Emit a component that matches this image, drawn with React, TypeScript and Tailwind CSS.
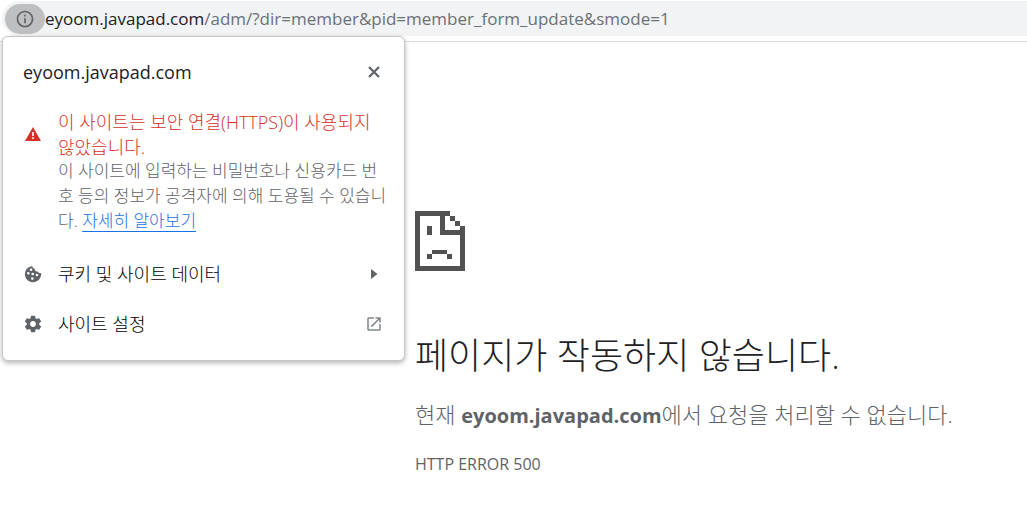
import type { ReactNode } from "react";

function InfoIcon() {
  return (
    <svg viewBox="0 0 24 24" className="size-5" fill="#5f6368" aria-hidden="true">
      <path d="M11 7h2v2h-2zm0 4h2v6h-2zm1-9C6.48 2 2 6.48 2 12s4.48 10 10 10 10-4.48 10-10S17.52 2 12 2zm0 18c-4.41 0-8-3.59-8-8s3.59-8 8-8 8 3.59 8 8-3.59 8-8 8z" />
    </svg>
  );
}

function CloseIcon() {
  return (
    <svg viewBox="0 0 12 12" className="size-3" stroke="#5f6368" strokeWidth="2.2" aria-hidden="true">
      <path d="M1 1l10 10M11 1L1 11" />
    </svg>
  );
}

function WarningIcon() {
  return (
    <svg viewBox="0 0 16 14" className="h-3.5 w-4" aria-hidden="true">
      <path d="M8 0l8 14H0z" fill="#d93025" />
      <path d="M7.2 5h1.6v4H7.2zM7.2 10.2h1.6v1.7H7.2z" fill="#fff" />
    </svg>
  );
}

function CookieIcon() {
  return (
    <svg viewBox="0 0 18 18" className="size-[18px]" aria-hidden="true">
      <path
        d="M8.2.9A8.2 8.2 0 1 0 17.2 9c0-.3 0-.6-.1-.9-1.300.4-2.700-.2-3.200-1.500-1.900.2-3.500-1.200-3.400-3.100C9.200 3.200 8.300 2.200 8.200.9z"
        fill="#5f6368"
      />
      <g fill="#fff">
        <circle cx="7" cy="4.700" r="1.300" />
        <circle cx="4.300" cy="8.300" r="1.300" />
        <circle cx="8.700" cy="9" r="1.300" />
        <circle cx="13" cy="10" r="1.300" />
        <circle cx="8.300" cy="13.600" r="1.300" />
      </g>
    </svg>
  );
}

function GearIcon() {
  return (
    <svg viewBox="0 0 24 24" className="size-5" fill="#5f6368" aria-hidden="true">
      <path d="M19.430 12.980c.04-.32.07-.64.07-.98s-.03-.66-.07-.98l2.110-1.650c.19-.15.24-.42.12-.64l-2-3.460c-.12-.22-.39-.3-.61-.22l-2.490 1c-.52-.4-1.080-.73-1.690-.98l-.38-2.650C14.460 2.180 14.250 2 14 2h-4c-.25 0-.46.18-.49.42l-.38 2.650c-.61.25-1.170.59-1.690.98l-2.490-1c-.23-.09-.49 0-.61.22l-2 3.460c-.13.22-.07.49.12.64l2.110 1.650c-.04.32-.07.65-.07.98s.03.66.07.98l-2.110 1.650c-.19.15-.24.42-.12.64l2 3.460c.12.22.39.3.61.22l2.490-1c.52.4 1.080.73 1.690.98l.38 2.650c.03.24.24.42.49.42h4c.25 0 .46-.18.49-.42l.38-2.650c.61-.25 1.170-.59 1.690-.98l2.490 1c.23.09.49 0 .61-.22l2-3.460c.12-.22.07-.49-.12-.64l-2.110-1.650zM12 15.500c-1.930 0-3.500-1.570-3.500-3.500s1.570-3.500 3.500-3.500 3.500 1.570 3.500 3.500-1.570 3.500-3.500 3.500z" />
    </svg>
  );
}

function ArrowIcon() {
  return (
    <svg viewBox="0 0 18 18" className="size-[18px]" fill="#5f6368" aria-hidden="true">
      <path d="M6 4l6.500 5L6 14z" />
    </svg>
  );
}

function LaunchIcon() {
  return (
    <svg viewBox="0 0 24 24" className="size-[18px]" fill="#80868b" aria-hidden="true">
      <path d="M19 19H5V5h7V3H5c-1.110 0-2 .9-2 2v14c0 1.100.89 2 2 2h14c1.100 0 2-.9 2-2v-7h-2v7zM14 3v2h3.590l-9.830 9.830 1.410 1.410L19 6.410V10h2V3h-7z" />
    </svg>
  );
}

function SadPageIcon() {
  return (
    <svg viewBox="0 0 50 60" className="h-[60px] w-[50px]" fill="#525252" shapeRendering="crispEdges" aria-hidden="true">
      <path d="M0 0h35v5H30v14h20v41H0zM5 5v50h40V24H25V5z" fillRule="evenodd" />
      <path d="M35 5h5v5h-5zM40 10h5v5h-5zM45 15h5v5h-5zM12 15h5v9h-5zM17 39h15v4H17zM12 43h5v5h-5zM32 43h5v5h-5z" />
    </svg>
  );
}

function MenuRow({ icon, label, trailing }: { icon: ReactNode; label: string; trailing: ReactNode }) {
  return (
    <button type="button" className="flex h-[50px] w-full items-center pr-[21px] pl-5 text-left text-lg text-black">
      <span className="flex w-5 justify-center">{icon}</span>
      <span className="ml-[15px] grow">{label}</span>
      {trailing}
    </button>
  );
}

function SiteInfoPopup() {
  return (
    <section
      aria-label="eyoom.javapad.com"
      className="absolute top-9 left-0.5 w-[403px] rounded-md border border-[#c4c6c8] bg-white pb-[11px] shadow-[0_2px_5px_rgba(0,0,0,0.3)]"
    >
      <div className="flex h-[69px] items-center justify-between pr-6 pl-5">
        <h2 className="text-lg font-normal text-[#202124]">eyoom.javapad.com</h2>
        <button type="button" aria-label="닫기">
          <CloseIcon />
        </button>
      </div>
      <div className="flex pb-4 pl-5">
        <span className="flex w-5 justify-center pt-[21px]">
          <WarningIcon />
        </span>
        <div className="ml-[15px] pt-1 whitespace-nowrap">
          <p className="-mb-0.5 text-lg leading-[25px] text-[#d93025]">
            이 사이트는 보안 연결(HTTPS)이 사용되지
            <br />
            않았습니다.
          </p>
          <p className="text-[17px] leading-[25px] text-[#5f6368]">
            이 사이트에 입력하는 비밀번호나 신용카드 번
            <br />
            호 등의 정보가 공격자에 의해 도용될 수 있습니
            <br />
            다.{" "}
            <a href="#learn" className="text-[#1a73e8] underline underline-offset-4">
              자세히 알아보기
            </a>
          </p>
        </div>
      </div>
      <MenuRow icon={<CookieIcon />} label="쿠키 및 사이트 데이터" trailing={<ArrowIcon />} />
      <MenuRow icon={<GearIcon />} label="사이트 설정" trailing={<LaunchIcon />} />
    </section>
  );
}

export default function App() {
  return (
    <div className="relative min-h-screen overflow-hidden bg-white font-['Open_Sans','Noto_Sans_CJK_KR',sans-serif] font-light">
      <header className="border-b border-[#dadce0] pt-px pb-[5px] pl-0.5">
        <div className="flex h-[35px] items-center rounded-l-full bg-[#f1f3f4] pl-[3px]">
          <button
            type="button"
            aria-label="사이트 정보 보기"
            className="flex h-[30px] w-10 items-center justify-center rounded-full bg-[#bdbfc1]"
          >
            <InfoIcon />
          </button>
          <p className="text-[17px] font-normal whitespace-nowrap text-[#6c7075]">
            <span className="text-[#202124]">eyoom.javapad.com</span>
            /adm/?dir=member&amp;pid=member_form_update&amp;smode=1
          </p>
        </div>
      </header>
      <main className="pt-[169px] pl-[415px] whitespace-nowrap text-[#5f6368]">
        <SadPageIcon />
        <h1 className="mt-[61px] text-4xl leading-[48px] text-[#202124]">페이지가 작동하지 않습니다.</h1>
        <p className="mt-[18px] text-[22px] leading-[32px]">
          현재 <strong className="text-xl leading-[32px] font-bold">eyoom.javapad.com</strong>에서 요청을 처리할 수 없습니다.
        </p>
        <p className="mt-5 text-base leading-6 font-normal">HTTP ERROR 500</p>
      </main>
      <SiteInfoPopup />
    </div>
  );
}
